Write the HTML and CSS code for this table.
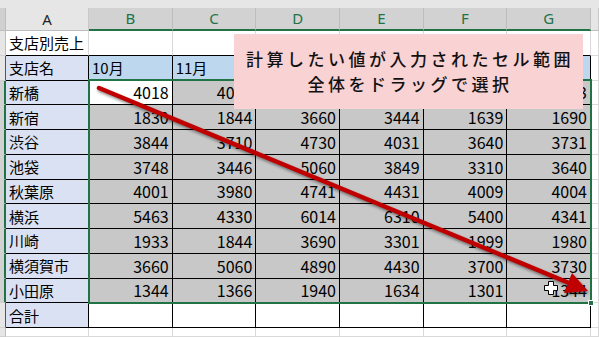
FILE: index.html
```html
<!DOCTYPE html>
<html lang="ja">
<head>
<meta charset="utf-8">
<title>支店別売上</title>
<link rel="stylesheet" href="styles.css">
</head>
<body>
<div class="sheet">
  <div class="band"></div>

  <div class="corner"></div>
  <div class="ch">A</div>
  <div class="ch sel">B</div>
  <div class="ch sel">C</div>
  <div class="ch sel">D</div>
  <div class="ch sel">E</div>
  <div class="ch sel">F</div>
  <div class="ch sel">G</div>
  <div class="ch"></div>

  <div class="rh"></div>
  <div class="c hd1 lab">支店別売上</div>
  <div class="c hd1"></div><div class="c hd1"></div><div class="c hd1"></div><div class="c hd1"></div><div class="c hd1"></div><div class="c hd1"></div>
  <div class="c"></div>

  <div class="rh tbl"></div>
  <div class="c tb nm">支店名</div>
  <div class="c tb mo">10月</div><div class="c tb mo">11月</div><div class="c tb mo"></div><div class="c tb mo"></div><div class="c tb mo"></div><div class="c tb mo"></div>
  <div class="c"></div>

  <div class="rh on"></div>
  <div class="c tb nm">新橋</div>
  <div class="c tb v act">4018</div><div class="c tb v">4050</div><div class="c tb v"></div><div class="c tb v"></div><div class="c tb v"></div><div class="c tb v">3913</div>
  <div class="c"></div>

  <div class="rh on"></div>
  <div class="c tb nm">新宿</div>
  <div class="c tb v">1830</div><div class="c tb v">1844</div><div class="c tb v">3660</div><div class="c tb v">3444</div><div class="c tb v">1639</div><div class="c tb v">1690</div>
  <div class="c"></div>

  <div class="rh on"></div>
  <div class="c tb nm">渋谷</div>
  <div class="c tb v">3844</div><div class="c tb v">3710</div><div class="c tb v">4730</div><div class="c tb v">4031</div><div class="c tb v">3640</div><div class="c tb v">3731</div>
  <div class="c"></div>

  <div class="rh on"></div>
  <div class="c tb nm">池袋</div>
  <div class="c tb v">3748</div><div class="c tb v">3446</div><div class="c tb v">5060</div><div class="c tb v">3849</div><div class="c tb v">3310</div><div class="c tb v">3640</div>
  <div class="c"></div>

  <div class="rh on"></div>
  <div class="c tb nm">秋葉原</div>
  <div class="c tb v">4001</div><div class="c tb v">3980</div><div class="c tb v">4741</div><div class="c tb v">4431</div><div class="c tb v">4009</div><div class="c tb v">4004</div>
  <div class="c"></div>

  <div class="rh on"></div>
  <div class="c tb nm">横浜</div>
  <div class="c tb v">5463</div><div class="c tb v">4330</div><div class="c tb v">6014</div><div class="c tb v">6310</div><div class="c tb v">5400</div><div class="c tb v">4341</div>
  <div class="c"></div>

  <div class="rh on"></div>
  <div class="c tb nm">川崎</div>
  <div class="c tb v">1933</div><div class="c tb v">1844</div><div class="c tb v">3690</div><div class="c tb v">3301</div><div class="c tb v">1999</div><div class="c tb v">1980</div>
  <div class="c"></div>

  <div class="rh on"></div>
  <div class="c tb nm">横須賀市</div>
  <div class="c tb v">3660</div><div class="c tb v">5060</div><div class="c tb v">4890</div><div class="c tb v">4430</div><div class="c tb v">3700</div><div class="c tb v">3730</div>
  <div class="c"></div>

  <div class="rh on"></div>
  <div class="c tb nm">小田原</div>
  <div class="c tb v">1344</div><div class="c tb v">1366</div><div class="c tb v">1940</div><div class="c tb v">1634</div><div class="c tb v">1301</div><div class="c tb v">1344</div>
  <div class="c"></div>

  <div class="rh tbl"></div>
  <div class="c tb nm">合計</div>
  <div class="c tb"></div><div class="c tb"></div><div class="c tb"></div><div class="c tb"></div><div class="c tb"></div><div class="c tb"></div>
  <div class="c"></div>

  <div class="rh"></div>
  <div class="c"></div><div class="c"></div><div class="c"></div><div class="c"></div><div class="c"></div><div class="c"></div><div class="c"></div>
  <div class="c"></div>

  <div class="selbox"></div>
  <div class="handle"></div>

  <div class="callout">
    <div class="cl">計算したい値が入力されたセル範囲</div>
    <div class="cl">全体をドラッグで選択</div>
  </div>

  <svg class="arrow" width="599" height="337" viewBox="0 0 599 337" aria-hidden="true">
    <g class="shaft">
      <line x1="99" y1="88" x2="569" y2="283" stroke="#c00000" stroke-width="4.5" stroke-linecap="round"/>
      <polygon points="588,291 572,273 564,293" fill="#c00000"/>
    </g>
    <path d="M548.5 281.5 h5 v4 h4 v5 h-4 v4 h-5 v-4 h-4 v-5 h4 z" fill="#fff" stroke="#000" stroke-width="1"/>
  </svg>
</div>
</body>
</html>
```

FILE: styles.css
```css
* { box-sizing: border-box; }

html, body {
  margin: 0;
  padding: 0;
  background: #fff;
}

.sheet {
  position: relative;
  width: 599px;
  height: 337px;
  overflow: hidden;
  display: grid;
  grid-template-columns: 6px 83px repeat(6, 83.67px) 1fr;
  grid-template-rows: 8px 23px repeat(12, 24.75px) 1fr;
  font-family: "Noto Sans CJK JP", "Noto Sans", sans-serif;
  font-size: 15px;
  color: #000;
}

.band {
  grid-column: 1 / -1;
  background: #e6e6e6;
}

.corner {
  background: #d0d0d0;
  border-right: 1px solid #bdbdbd;
  border-bottom: 1px solid #bdbdbd;
}

.ch {
  background: #e6e6e6;
  border-right: 1px solid #c8c8c8;
  border-bottom: 1px solid #bdbdbd;
  display: flex;
  align-items: center;
  justify-content: center;
  font-family: "Noto Sans", sans-serif;
  font-size: 15px;
  color: #262626;
  line-height: 1;
}

.ch.sel {
  background: #d2d2d2;
  color: #217346;
  border-right-color: #bdbdbd;
  border-bottom: 2px solid #217346;
}

.rh {
  background: #e6e6e6;
  border-right: 1px solid #bdbdbd;
  border-bottom: 1px solid #d0d0d0;
}

.rh.tbl { border-right-color: #555; }

.rh.on {
  background: #d2d2d2;
  border-right: 2px solid #217346;
}

.c {
  background: #fff;
  border-right: 1px solid #d9d9d9;
  border-bottom: 1px solid #d9d9d9;
  display: flex;
  align-items: center;
  line-height: 1;
  white-space: nowrap;
  overflow: hidden;
}

.lab { padding-left: 3px; }

.hd1 { border-bottom-color: #000; }

.tb {
  border-right-color: #000;
  border-bottom-color: #000;
}

.nm {
  background: #d9e1f2;
  padding-left: 3px;
}

.mo {
  background: #bdd7ee;
  padding-left: 3px;
}

.v {
  background: #c8c8c8;
  justify-content: flex-end;
  padding-right: 3px;
  font-size: 16px;
}

.v.act { background: #fff; }

.selbox {
  position: absolute;
  left: 88px;
  top: 79px;
  width: 504px;
  height: 225px;
  border: 2px solid #217346;
  pointer-events: none;
}

.handle {
  position: absolute;
  left: 588px;
  top: 300px;
  width: 6px;
  height: 6px;
  background: #217346;
  border: 1px solid #fff;
}

.callout {
  position: absolute;
  left: 234px;
  top: 34px;
  width: 349px;
  height: 75px;
  background: #f9d2d3;
  padding-top: 12px;
  padding-left: 3px;
  text-align: center;
  font-size: 17px;
  font-weight: 500;
  letter-spacing: 3.5px;
  line-height: 25px;
  color: #111;
}

.cl { white-space: nowrap; }

.arrow {
  position: absolute;
  left: 0;
  top: 0;
  pointer-events: none;
}

.shaft {
  filter: drop-shadow(1.5px 2px 1.5px rgba(0, 0, 0, 0.45));
}
```
